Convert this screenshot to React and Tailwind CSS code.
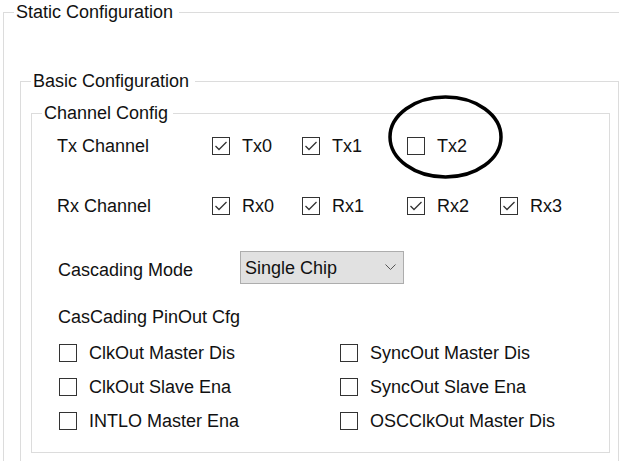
import React from "react";

function CheckBox({ checked, label, className = "" }) {
  return (
    <div className={`flex items-center ${className}`}>
      <svg width="18" height="18" viewBox="0 0 18 18" className="shrink-0">
        <rect x="0.5" y="0.5" width="17" height="17" fill="#fff" stroke="#333" />
        {checked && (
          <polyline
            points="3.5,9 7,12.5 14.5,5"
            fill="none"
            stroke="#333"
            strokeWidth="1.3"
          />
        )}
      </svg>
      <span className="ml-[12px] whitespace-nowrap">{label}</span>
    </div>
  );
}

export default function App() {
  return (
    <div className="relative w-[619px] h-[461px] overflow-hidden bg-white text-[18px] leading-[20px] text-[#111] font-['Liberation_Sans',Arial,sans-serif]">
      {/* Static Configuration */}
      <fieldset className="ml-[3px] mt-[2px] w-[700px] h-[600px] border border-[#dcdcdc]">
        <legend className="ml-[10px] pl-[2px] pr-[6px] leading-[20px]">Static Configuration</legend>

        {/* Basic Configuration */}
        <fieldset className="ml-[16px] mt-[49px] w-[599px] h-[500px] border border-[#dcdcdc]">
          <legend className="ml-[10px] pl-[2px] pr-[6px] leading-[20px]">Basic Configuration</legend>

          {/* Channel Config */}
          <fieldset className="ml-[10px] mt-[12px] w-[579px] border border-[#dcdcdc] pb-[14px]">
            <legend className="ml-[10px] pl-[2px] pr-[5px] leading-[20px]">Channel Config</legend>

            <div className="pl-[25px]">
              <div className="flex items-center h-[24px] mt-[11px]">
                <div className="w-[155px]">Tx Channel</div>
                <CheckBox checked label="Tx0" className="w-[90px]" />
                <CheckBox checked label="Tx1" className="w-[105px]" />
                <CheckBox checked={false} label="Tx2" className="w-[93px]" />
              </div>

              <div className="flex items-center h-[24px] mt-[36px]">
                <div className="w-[155px]">Rx Channel</div>
                <CheckBox checked label="Rx0" className="w-[90px]" />
                <CheckBox checked label="Rx1" className="w-[105px]" />
                <CheckBox checked label="Rx2" className="w-[93px]" />
                <CheckBox checked label="Rx3" />
              </div>

              <div className="flex items-center h-[33px] mt-[33px]">
                <div className="w-[183px] pl-[1px] pt-[4px]">Cascading Mode</div>
                <div className="flex items-center justify-between w-[164px] h-[33px] border border-[#adadad] bg-[#e1e1e1] pl-[4px] pr-[7px]">
                  <span>Single Chip</span>
                  <svg width="11" height="7" viewBox="0 0 11 7">
                    <polyline points="0.5,0.5 5.5,5.5 10.5,0.5" fill="none" stroke="#555" strokeWidth="1" />
                  </svg>
                </div>
              </div>

              <div className="mt-[23px] pl-[1px]">CasCading PinOut Cfg</div>

              <div className="grid grid-cols-[281px_1fr] mt-[9px] ml-[2px]">
                <CheckBox label="ClkOut Master Dis" className="h-[34px]" />
                <CheckBox label="SyncOut Master Dis" className="h-[34px]" />
                <CheckBox label="ClkOut Slave Ena" className="h-[34px]" />
                <CheckBox label="SyncOut Slave Ena" className="h-[34px]" />
                <CheckBox label="INTLO Master Ena" className="h-[34px]" />
                <CheckBox label="OSCClkOut Master Dis" className="h-[34px]" />
              </div>
            </div>
          </fieldset>
        </fieldset>
      </fieldset>

      {/* hand-drawn annotation */}
      <svg className="absolute left-[388px] top-[95px]" width="115" height="84" viewBox="0 0 115 84">
        <ellipse cx="57.5" cy="42" rx="55.5" ry="40" fill="none" stroke="#000" strokeWidth="3.5" />
      </svg>
    </div>
  );
}
